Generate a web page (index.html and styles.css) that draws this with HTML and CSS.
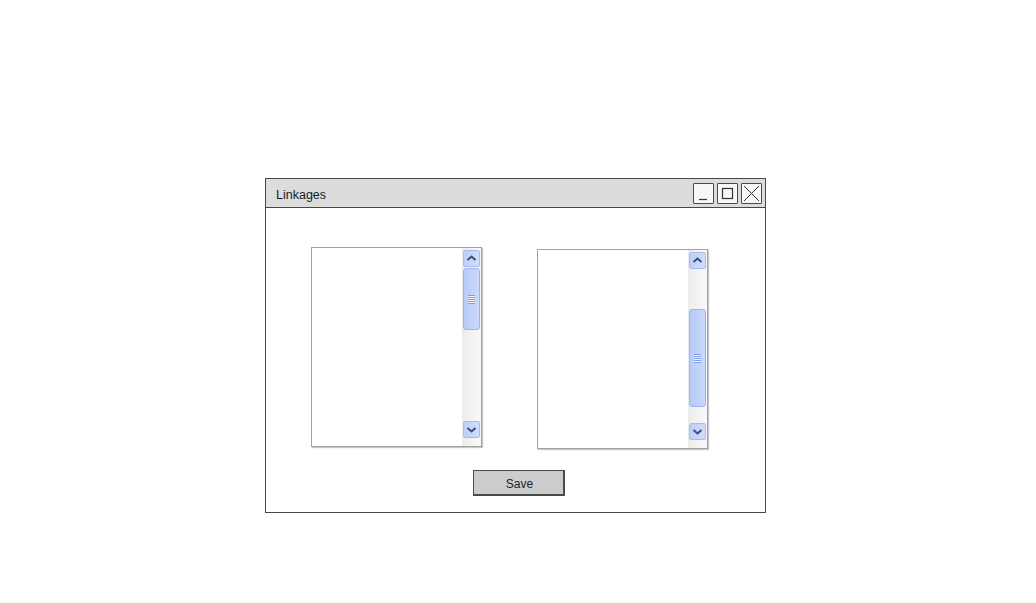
FILE: index.html
```html
<!DOCTYPE html>
<html>
<head>
<meta charset="utf-8">
<link rel="stylesheet" href="styles.css">
</head>
<body>
<div class="window">
  <div class="titlebar">
    <span class="title">Linkages</span>
    <div class="controls">
      <div class="ctl"><svg width="19" height="19" viewBox="0 0 19 19"><line x1="5" y1="15.5" x2="13" y2="15.5" stroke="#333" stroke-width="1.2"/></svg></div>
      <div class="ctl"><svg width="19" height="19" viewBox="0 0 19 19"><rect x="4.5" y="4.5" width="10" height="10" fill="none" stroke="#333" stroke-width="1.2"/></svg></div>
      <div class="ctl"><svg width="19" height="19" viewBox="0 0 19 19"><path d="M2 2 L17 17 M17 2 L2 17" stroke="#333" stroke-width="1"/></svg></div>
    </div>
  </div>
  <div class="content">
    <div class="lists">
      <div class="listbox">
        <div class="list-body"></div>
        <div class="scrollbar">
          <div class="sbtn"><svg width="15" height="15" viewBox="0 0 15 15"><path d="M3.5 9 L7.5 5.5 L11.5 9" fill="none" stroke="#3e4d72" stroke-width="2"/></svg></div>
          <div class="track">
            <div class="thumb" style="margin-top:1px;height:60px"><div class="grip"></div></div>
          </div>
          <div class="sbtn"><svg width="15" height="15" viewBox="0 0 15 15"><path d="M3.5 6 L7.5 9.5 L11.5 6" fill="none" stroke="#3e4d72" stroke-width="2"/></svg></div>
        </div>
      </div>
      <div class="listbox second">
        <div class="list-body"></div>
        <div class="scrollbar">
          <div class="sbtn"><svg width="15" height="15" viewBox="0 0 15 15"><path d="M3.5 9 L7.5 5.5 L11.5 9" fill="none" stroke="#3e4d72" stroke-width="2"/></svg></div>
          <div class="track">
            <div class="thumb" style="margin-top:40px;height:96px"><div class="grip"></div></div>
          </div>
          <div class="sbtn"><svg width="15" height="15" viewBox="0 0 15 15"><path d="M3.5 6 L7.5 9.5 L11.5 6" fill="none" stroke="#3e4d72" stroke-width="2"/></svg></div>
        </div>
      </div>
    </div>
    <div class="actions">
      <button class="save">Save</button>
    </div>
  </div>
</div>
</body>
</html>
```
FILE: styles.css
```css
html, body {
  margin: 0;
  padding: 0;
  background: #ffffff;
}
body {
  padding: 178px 0 0 265px;
  font-family: "Liberation Sans", "DejaVu Sans", sans-serif;
  color: #222;
}
.window {
  width: 499px;
  height: 333px;
  border: 1px solid #474747;
  background: #fff;
  display: flex;
  flex-direction: column;
}
.titlebar {
  height: 28px;
  background: #dcdcdc;
  border-bottom: 1px solid #474747;
  display: flex;
  align-items: center;
  justify-content: space-between;
  padding: 0 3px 0 10px;
}
.title {
  font-size: 12.5px;
  color: #1a1a1a;
  padding-top: 3px;
}
.controls {
  display: flex;
  gap: 3px;
  padding-top: 1px;
}
.ctl {
  width: 19px;
  height: 19px;
  border: 1px solid #4a4a4a;
  border-radius: 1px;
  background: #f7f7f7;
  display: flex;
}
.content {
  padding: 39px 0 0 45px;
  display: flex;
  flex-direction: column;
}
.lists {
  display: flex;
  align-items: flex-start;
  gap: 55px;
}
.listbox {
  width: 169px;
  height: 198px;
  border: 1px solid #a3a39b;
  box-shadow: 1px 1px 1px rgba(0,0,0,0.22);
  background: #fff;
  display: flex;
}
.listbox.second {
  margin-top: 2px;
}
.list-body {
  flex: 1;
}
.scrollbar {
  width: 19px;
  background: linear-gradient(to right, #ececec, #f9f9f9);
  display: flex;
  flex-direction: column;
  padding: 2px 1px 8px 1px;
  box-sizing: border-box;
}
.sbtn {
  width: 15px;
  height: 15px;
  border: 1px solid #a9bdec;
  border-radius: 2px;
  background: linear-gradient(to right, #bcd0fa, #cfdcfc);
  display: flex;
}
.track {
  flex: 1;
  display: flex;
  flex-direction: column;
  padding-bottom: 2px;
}
.thumb {
  width: 15px;
  border: 1px solid #9db4ea;
  border-radius: 3px;
  background: linear-gradient(to right, #b7cbf8, #cad9fc);
  display: flex;
  align-items: center;
  justify-content: center;
}
.grip {
  width: 7px;
  height: 9px;
  background: repeating-linear-gradient(to bottom, #7f9de4 0, #7f9de4 1px, #eef3ff 1px, #eef3ff 2px);
}
.actions {
  padding: 21px 0 0 162px;
  display: flex;
}
.save {
  width: 92px;
  height: 26px;
  border: 1px solid #4a4a4a;
  border-right-width: 2px;
  border-bottom-width: 2px;
  background: #cccccc;
  font-family: "Liberation Sans", "DejaVu Sans", sans-serif;
  font-size: 12px;
  color: #222;
  padding: 2px 0 0 2px;
  margin: 0;
}
```
